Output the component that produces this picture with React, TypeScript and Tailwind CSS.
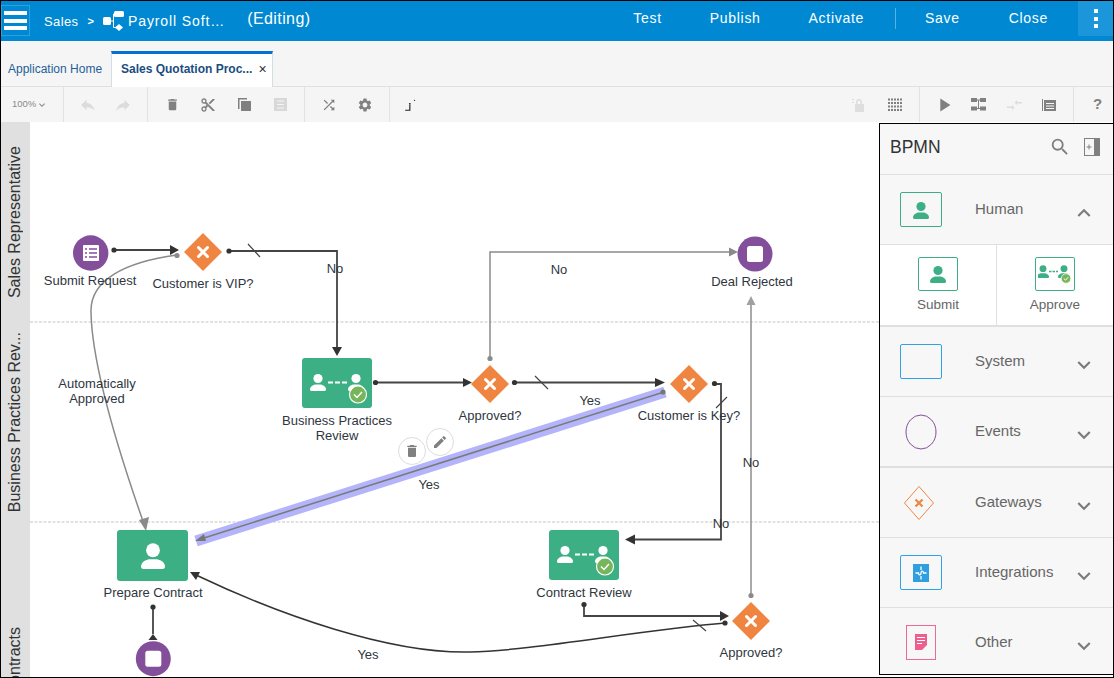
import type { ReactNode } from 'react';
import {
  MdContentCut,
  MdDelete,
  MdKeyboardArrowDown,
  MdPlayArrow,
  MdReply,
  MdSearch,
  MdSettings,
  MdShuffle,
} from 'react-icons/md';

const dark = '#444';
const grey = '#8a8a8a';

function Person({ x, y, s = 1, fill = '#fff' }: { x: number; y: number; s?: number; fill?: string }) {
  return (
    <g transform={`translate(${x} ${y}) scale(${s})`} fill={fill}>
      <circle cx="0" cy="-4.5" r="4.6" />
      <path d="M-8 6.5C-8 3-4 1.5-2 1.5h4c2 0 6 1.5 6 5 0 .8-.6 1.5-1.5 1.5h-13C-7.4 8-8 7.3-8 6.5z" />
    </g>
  );
}

function Check({ x, y }: { x: number; y: number }) {
  return (
    <g>
      <circle cx={x} cy={y} r="8.5" fill="#76b55a" stroke="#fff" strokeWidth="1.2" />
      <path d={`M${x - 4} ${y}l3 3 5-5.5`} fill="none" stroke="#fff" strokeWidth="1.5" />
    </g>
  );
}

function ReviewTask({ x, y }: { x: number; y: number }) {
  return (
    <g>
      <rect x={x} y={y} width="70" height="50" rx="3" fill="#3daf84" />
      <Person x={x + 16} y={y + 25} />
      <Person x={x + 54} y={y + 25} />
      <path d={`M${x + 26} ${y + 24.5}h20`} stroke="#fff" strokeWidth="2" strokeDasharray="5 2" />
      <Check x={x + 56} y={y + 36.5} />
    </g>
  );
}

function Gateway({ x, y }: { x: number; y: number }) {
  return (
    <g>
      <path d={`M${x} ${y - 19}L${x + 19} ${y}L${x} ${y + 19}L${x - 19} ${y}z`} fill="#ef8540" />
      <path
        d={`M${x - 4.5} ${y - 4.5}l9 9m0-9l-9 9`}
        stroke="#fff"
        strokeWidth="3"
        strokeLinecap="round"
      />
    </g>
  );
}

function EndEvent({ x, y }: { x: number; y: number }) {
  return (
    <g>
      <circle cx={x} cy={y} r="17.5" fill="#834f9b" />
      <rect x={x - 8} y={y - 8} width="16" height="16" rx="2.5" fill="#fff" />
    </g>
  );
}

function Dot({ x, y, fill = '#333' }: { x: number; y: number; fill?: string }) {
  return <circle cx={x} cy={y} r="2.6" fill={fill} />;
}

function Diagram() {
  return (
    <svg
      className="absolute left-0 top-0 h-[555px] w-[878px]"
      viewBox="1 122 878 555"
      fill="none"
    >
      <path d="M30 322H879M30 522H879" stroke="#d9d9d9" strokeWidth="1.5" strokeDasharray="3 1.5" />

      {/* grey edges */}
      <path d="M177 255C125 262 90 280 91 312C92 370 125 470 144 524" stroke={grey} strokeWidth="1.5" />
      <path d="M146 531L139 520L149 517z" fill={grey} />
      <Dot x={177} y={255.5} fill={grey} />
      <path d="M490 358V252H732" stroke={grey} strokeWidth="1.5" />
      <path d="M738 252L729 247.5V256.5z" fill={grey} />
      <Dot x={490} y={358.5} fill={grey} />
      <path d="M751 595V303" stroke="#a0a0a0" strokeWidth="1.8" />
      <path d="M751 296L746.5 305H755.5z" fill="#a0a0a0" />
      <Dot x={751} y={595.5} fill={grey} />

      {/* dark edges */}
      <path d="M114 250H172M229 251H337V350M376 382.5H465M515 382.5H658" stroke={dark} strokeWidth="1.8" />
      <path d="M179 250L170 245V255zM337 356L332 347H342zM472 382.5L463 378V387zM665 382.5L655 378V387z" fill="#333" />
      <path d="M248 244L260 257M535 376L548 389M716 408L727 397" stroke={dark} strokeWidth="1.2" />
      <path d="M715 384H721V539.5H632" stroke={dark} strokeWidth="1.8" />
      <path d="M625 539.5L635 534.5V544.5z" fill="#333" />
      <Dot x={114} y={250} />
      <Dot x={229} y={251} />
      <Dot x={375.5} y={382.5} />
      <Dot x={514.5} y={382.5} />
      <Dot x={714.5} y={383.5} />
      <path d="M584 605V616H722" stroke={dark} strokeWidth="1.8" />
      <path d="M729 616L720 611V621z" fill="#333" />
      <Dot x={584} y={604.5} />
      <path d="M725 623C640 630 530 651 470 652C390 654 280 615 196 575" stroke="#333" strokeWidth="1.5" />
      <path d="M190 572L200 572L196 580z" fill="#333" />
      <path d="M693 620L706 631" stroke={dark} strokeWidth="1.2" />
      <Dot x={725} y={623} />
      <path d="M153 607V634" stroke={dark} strokeWidth="1.8" />
      <path d="M153 634L148.5 640H157.5z" fill="#333" />
      <Dot x={153} y={607} />

      {/* selected edge */}
      <path d="M665 392L196 541" stroke="#b4b4fa" strokeWidth="11" />
      <path d="M664 392L204 538" stroke="#7a7a7a" strokeWidth="1.5" />
      <path d="M195 541L204 534L206 541z" fill="#777" />
      <Dot x={663} y={392} fill="#777" />

      {/* nodes */}
      <circle cx="90.7" cy="253" r="17.7" fill="#834f9b" />
      <rect x="83" y="245" width="16" height="16" rx="1" fill="#fff" />
      <path d="M85 249h2M89 249h8M85 253h2M89 253h8M85 257h2M89 257h8" stroke="#834f9b" strokeWidth="1.6" />
      <Gateway x={203} y={252} />
      <EndEvent x={755} y={254} />
      <ReviewTask x={302} y={358} />
      <Gateway x={490} y={384} />
      <Gateway x={689} y={384} />
      <rect x="117" y="530" width="71" height="51" rx="3" fill="#3daf84" />
      <Person x={153} y={557} s={1.5} />
      <ReviewTask x={549} y={530} />
      <Gateway x={751} y={621} />
      <EndEvent x={153.3} y={658.7} />
    </svg>
  );
}

function Label({ className, children }: { className: string; children: ReactNode }) {
  return (
    <div className={`absolute -translate-x-1/2 whitespace-nowrap text-center text-[13px] leading-[15px] text-[#2f3640] ${className}`}>
      {children}
    </div>
  );
}

function ToolGroup({ className = '', children }: { className?: string; children: ReactNode }) {
  return (
    <div className={`flex h-full items-center border-r border-[#e2e2e2] px-[6px] ${className}`}>
      {children}
    </div>
  );
}

function Tool({ className = 'text-[#808080]', children }: { className?: string; children: ReactNode }) {
  return <div className={`flex w-[36px] items-center justify-center ${className}`}>{children}</div>;
}

function PersonIcon() {
  return (
    <svg className="h-[20px] w-[20px]" viewBox="-10 -11 20 20">
      <Person x={0} y={0} fill="#3daf84" />
    </svg>
  );
}

function ApproveIcon() {
  return (
    <svg className="h-[22px] w-[34px]" viewBox="0 0 34 22">
      <Person x={5} y={9} s={0.75} fill="#3daf84" />
      <Person x={26} y={9} s={0.75} fill="#3daf84" />
      <path d="M11 8.5h9" stroke="#3daf84" strokeWidth="1.5" strokeDasharray="2.5 1" />
      <circle cx="28" cy="15.5" r="4.8" fill="#76b55a" stroke="#fff" strokeWidth=".8" />
      <path d="M25.8 15.5l1.7 1.7 2.7-3" fill="none" stroke="#fff" strokeWidth="1" />
    </svg>
  );
}

function PaletteRow({
  title,
  open,
  className = 'h-[70px]',
  children,
}: {
  title: string;
  open?: boolean;
  className?: string;
  children: ReactNode;
}) {
  return (
    <div className={`flex items-center border-b border-[#e0e0e0] bg-[#f7f7f7] pl-[20px] pr-[16px] ${className}`}>
      <div className="flex h-[35px] w-[42px] items-center justify-center">{children}</div>
      <span className="ml-[33px] flex-1 text-[15px] text-[#666]">{title}</span>
      <MdKeyboardArrowDown
        className={`mt-[7px] h-[26px] w-[26px] text-[#7b7b7b] ${open ? 'rotate-180' : ''}`}
      />
    </div>
  );
}

function Palette() {
  return (
    <div className="mt-px mb-[2px] flex w-[234px] flex-col border-b border-l border-t border-black bg-[#f7f7f7]">
      <div className="flex h-[51px] shrink-0 items-center border-b border-[#e0e0e0] pb-[4px] pl-[10px] pr-[13px]">
        <span className="flex-1 text-[17.5px] text-[#333]">BPMN</span>
        <MdSearch className="h-[22px] w-[22px] text-[#808080]" />
        <svg className="ml-[13px] h-[18px] w-[16px] text-[#808080]" viewBox="0 0 16 18" fill="none">
          <rect x=".5" y=".5" width="15" height="17" stroke="currentColor" />
          <rect x="10" y="1" width="5" height="16" fill="currentColor" />
          <path d="M2.5 9h5M5 6.5v5" stroke="currentColor" />
        </svg>
      </div>
      <PaletteRow title="Human" open>
        <div className="flex h-[35px] w-[42px] items-center justify-center rounded-[2px] border border-[#3daf84]">
          <PersonIcon />
        </div>
      </PaletteRow>
      <div className="flex h-[82px] shrink-0 border-b-2 border-[#e0e0e0] bg-white">
        <div className="flex w-[117px] flex-col items-center border-r border-[#e0e0e0] pt-[12px]">
          <div className="flex h-[34px] w-[40px] items-center justify-center rounded-[2px] border border-[#3daf84]">
            <PersonIcon />
          </div>
          <span className="mt-[6px] text-[13.5px] leading-[15px] text-[#666]">Submit</span>
        </div>
        <div className="flex flex-1 flex-col items-center pt-[12px]">
          <div className="flex h-[34px] w-[40px] items-center justify-center rounded-[2px] border border-[#3daf84]">
            <ApproveIcon />
          </div>
          <span className="mt-[6px] text-[13.5px] leading-[15px] text-[#666]">Approve</span>
        </div>
      </div>
      <PaletteRow title="System">
        <div className="h-[35px] w-[42px] rounded-[2px] border border-[#2fa3e6]" />
      </PaletteRow>
      <PaletteRow title="Events" className="h-[71px] border-b-2">
        <svg className="h-[36px] w-[32px]" viewBox="0 0 32 36" fill="none">
          <ellipse cx="16" cy="18" rx="15" ry="17" stroke="#834f9b" />
        </svg>
      </PaletteRow>
      <PaletteRow title="Gateways">
        <svg className="-ml-[4px] h-[36px] w-[32px]" viewBox="0 0 32 36" fill="none">
          <path d="M16 1.5L30.5 18L16 34.5L1.5 18z" stroke="#ef8540" strokeLinejoin="round" />
          <path d="M12.5 14.5l7 7m0-7l-7 7" stroke="#ef8540" strokeWidth="2.2" />
        </svg>
      </PaletteRow>
      <PaletteRow title="Integrations">
        <div className="flex h-[35px] w-[42px] items-center justify-center rounded-[2px] border border-[#2fa3e6]">
          <svg className="h-[18px] w-[16px]" viewBox="0 0 16 18" fill="none">
            <rect width="16" height="18" fill="#2f9fe0" />
            <path d="M8 2.5v3.5M8 12v3.5M2.5 9h3c0 2.5 2.5 2.5 2.5 0s2.500-2.5 2.500 0h3" stroke="#fff" strokeWidth="1.3" />
          </svg>
        </div>
      </PaletteRow>
      <PaletteRow title="Other" className="flex-1 border-b-0 pt-[2px]">
        <div className="flex h-[35px] w-[30px] items-center justify-center border border-[#ec6a96]">
          <svg className="h-[16px] w-[13px]" viewBox="0 0 13 16">
            <path d="M0 0h12v11l-5 5H0z" fill="#ec5f8e" />
            <path d="M2 3.5h8M2 6.5h8M2 9.5h5" stroke="#fff" />
          </svg>
        </div>
      </PaletteRow>
    </div>
  );
}

export default function App() {
  return (
    <div className="flex h-[678px] w-[1114px] flex-col overflow-hidden border border-black bg-white font-['Liberation_Sans',Arial,sans-serif]">
      <header className="relative flex h-[40px] shrink-0 items-center bg-[#0089d2] text-white">
        <div className="mt-[4px] flex h-[31px] w-[29px] flex-col items-center justify-center gap-[3.5px] self-start border border-[#2aa0dd]">
          <span className="h-[4px] w-[23px] bg-white" />
          <span className="h-[4px] w-[23px] bg-white" />
          <span className="h-[4px] w-[23px] bg-white" />
        </div>
        <span className="ml-[14px] mt-[1px] text-[13px] tracking-[.4px]">Sales</span>
        <span className="ml-[9px] mt-[1px] text-[11px] font-bold">&gt;</span>
        <svg className="ml-[9px] h-[20px] w-[21px]" viewBox="0 0 21 20" fill="none">
          <rect x="0" y="6" width="8" height="8" rx="1.5" fill="#fff" />
          <rect x="11" y="0" width="10" height="6" rx="1.5" fill="#fff" />
          <path d="M16 13l4 3.5-4 3.5-4-3.5z" fill="#fff" />
          <path d="M8 10h2.5V3H12M10.5 10v6.5H13" stroke="#fff" />
        </svg>
        <span className="ml-[4px] mt-[1px] text-[14px] tracking-[.9px]">Payroll Soft…</span>
        <span className="ml-[22px] -mt-[5px] text-[16px] tracking-[.4px]">(Editing)</span>
        <nav className="absolute inset-y-0 right-0 flex items-center text-[14px] tracking-[.7px]">
          <span className="mr-[48px] -mt-[5px]">Test</span>
          <span className="mr-[48px] -mt-[5px]">Publish</span>
          <span className="mr-[31px] -mt-[5px]">Activate</span>
          <span className="mr-[29px] mb-[5px] h-[21px] w-px bg-[#55b2e3]" />
          <span className="mr-[49px] -mt-[5px]">Save</span>
          <span className="-mt-[5px]">Close</span>
          <div className="ml-[30px] flex h-[35px] w-[35px] flex-col items-center justify-center gap-[3.5px] self-start bg-[#1b96da]">
            <span className="h-[4px] w-[4px] bg-white" />
            <span className="h-[4px] w-[4px] bg-white" />
            <span className="h-[4px] w-[4px] bg-white" />
          </div>
        </nav>
      </header>

      <div className="flex h-[46px] shrink-0 items-end border-b border-[#e0e0e0] bg-[#f5f5f5] text-[12px]">
        <span className="mb-[8px] ml-[7px] w-[103px] text-[#1f5f99]">Application Home</span>
        <div className="-mb-px flex h-[36px] w-[162px] items-center border-x border-t-[3px] border-x-[#d5dde5] border-t-[#0572ce] bg-white pb-[3px] pl-[9px] font-bold text-[#1a4d80]">
          <span>Sales Quotation Proc...</span>
          <span className="ml-[6px] text-[14px] font-normal text-[#333]">×</span>
        </div>
      </div>

      <div className="flex h-[35px] shrink-0 items-center bg-[#f5f5f5]">
        <ToolGroup className="w-[63px] text-[9.5px] text-[#8a8a8a]">
          <span className="ml-[5px]">100%</span>
          <MdKeyboardArrowDown className="h-[12px] w-[12px]" />
        </ToolGroup>
        <ToolGroup className="w-[84px]">
          <Tool className="text-[#dcdcdc]"><MdReply className="h-[18px] w-[18px]" /></Tool>
          <Tool className="text-[#dcdcdc]"><MdReply className="h-[18px] w-[18px] -scale-x-100" /></Tool>
        </ToolGroup>
        <ToolGroup className="w-[157px]">
          <Tool><MdDelete className="h-[15px] w-[15px]" /></Tool>
          <Tool><MdContentCut className="h-[16px] w-[16px]" /></Tool>
          <Tool>
            <svg className="h-[13px] w-[13px]" viewBox="0 0 13 13" fill="currentColor">
              <path d="M0 0h9v1.5H1.5V11H0zM3 3h10v10H3z" />
            </svg>
          </Tool>
          <Tool className="text-[#d8d8d8]">
            <svg className="h-[13px] w-[13px]" viewBox="0 0 13 13">
              <path d="M0 0h13v13H0z" fill="currentColor" />
              <path d="M3 3h7M3 6.5h7M3 10h7" stroke="#f5f5f5" />
            </svg>
          </Tool>
        </ToolGroup>
        <ToolGroup className="w-[85px]">
          <Tool><MdShuffle className="h-[16px] w-[16px]" /></Tool>
          <Tool><MdSettings className="h-[16px] w-[16px]" /></Tool>
        </ToolGroup>
        <div className="flex h-full flex-1 items-center pl-[3px]">
          <Tool className="text-[#222]">
            <svg className="h-[14px] w-[14px]" viewBox="0 0 12 12" fill="none">
              <path d="M1 10.5h4V6" stroke="currentColor" />
              <circle cx="5" cy="5" r=".8" fill="currentColor" />
              <circle cx="9" cy="2" r=".6" fill="currentColor" />
            </svg>
          </Tool>
        </div>
        <ToolGroup>
          <Tool className="text-[#dedede]">
            <svg className="h-[14px] w-[14px]" viewBox="0 0 14 14" fill="currentColor">
              <path d="M4 6V4a3 3 0 016 0v2h2v8H3V6zm1.5 0h3V4a1.5 1.5 0 00-3 0z" />
              <path d="M0 1h2v1H0zM0 4h2v1H0z" />
            </svg>
          </Tool>
          <Tool>
            <svg className="h-[14px] w-[15px]" viewBox="0 0 15 14" fill="none">
              <path d="M0 1.5h15M0 5h15M0 8.5h15M0 12h15" stroke="currentColor" strokeWidth="2" strokeDasharray="2 1" />
            </svg>
          </Tool>
        </ToolGroup>
        <ToolGroup className="w-[154px]">
          <Tool><MdPlayArrow className="h-[22px] w-[22px]" /></Tool>
          <Tool>
            <svg className="h-[13px] w-[15px]" viewBox="0 0 15 13" fill="currentColor">
              <path d="M0 0h6v4H0zM9 0h6v4H9zM0 8.5h6v4H0zM9 8.5h6v4H9z" />
              <path d="M6 2h3M6 10.5h3M7.5 2v8.5" stroke="currentColor" />
            </svg>
          </Tool>
          <Tool className="text-[#dcdcdc]">
            <svg className="h-[12px] w-[15px]" viewBox="0 0 15 12" fill="currentColor">
              <path d="M15 3H10V1L7.5 3.5 10 6V4.5h5zM0 7.5h5V6l2.5 2.5L5 11V9H0z" />
            </svg>
          </Tool>
          <Tool>
            <svg className="h-[12px] w-[14px]" viewBox="0 0 14 12" fill="none">
              <path d="M.5 0v12" stroke="currentColor" />
              <path d="M2 1h12v11H2z" fill="currentColor" />
              <path d="M4 4.5h8M4 7h8M4 9.5h8" stroke="#f5f5f5" />
            </svg>
          </Tool>
        </ToolGroup>
        <div className="flex h-full w-[39px] items-center justify-center pl-[8px] text-[15px] font-bold text-[#808080]">?</div>
      </div>

      <div className="flex min-h-0 flex-1">
        <div className="relative w-[878px] shrink-0 overflow-hidden">
          <div className="absolute inset-y-0 left-0 flex w-[29px] flex-col bg-[#e0e0e0] pr-[2px] text-[16px] text-[#333]">
            <div className="flex h-[200px] shrink-0 items-center justify-center">
              <span className="rotate-180 whitespace-nowrap [writing-mode:vertical-rl]">Sales Representative</span>
            </div>
            <div className="flex h-[200px] shrink-0 items-center justify-center">
              <span className="rotate-180 whitespace-nowrap [writing-mode:vertical-rl]">Business Practices Rev...</span>
            </div>
            <div className="flex h-[278px] shrink-0 items-center justify-center">
              <span className="rotate-180 whitespace-nowrap [writing-mode:vertical-rl]">Contracts</span>
            </div>
          </div>
          <Diagram />
          <Label className="left-[89px] top-[151px]">Submit Request</Label>
          <Label className="left-[202px] top-[154px]">Customer is VIP?</Label>
          <Label className="left-[334px] top-[139px]">No</Label>
          <Label className="left-[558px] top-[140px]">No</Label>
          <Label className="left-[751px] top-[152px]">Deal Rejected</Label>
          <Label className="left-[96px] top-[254px] text-[12.5px]">
            Automatically
            <br />
            Approved
          </Label>
          <Label className="left-[336px] top-[291px]">
            Business Practices
            <br />
            Review
          </Label>
          <Label className="left-[489px] top-[286px]">Approved?</Label>
          <Label className="left-[589px] top-[271px]">Yes</Label>
          <Label className="left-[688px] top-[286px]">Customer is Key?</Label>
          <Label className="left-[428px] top-[355px]">Yes</Label>
          <Label className="left-[750px] top-[333px]">No</Label>
          <Label className="left-[720px] top-[394px]">No</Label>
          <Label className="left-[152px] top-[463px]">Prepare Contract</Label>
          <Label className="left-[583px] top-[463px]">Contract Review</Label>
          <Label className="left-[750px] top-[523px]">Approved?</Label>
          <Label className="left-[367px] top-[525px]">Yes</Label>

          <div className="absolute left-[425px] top-[306px] flex h-[28px] w-[28px] items-center justify-center rounded-full border border-[#ddd] bg-white text-[#808080]">
            <svg className="h-[16px] w-[16px]" viewBox="0 0 24 24" fill="currentColor">
              <path d="M3 17.25V21h3.75L17.81 9.94l-3.75-3.75zM20.71 7.04a1 1 0 000-1.41l-2.34-2.34a1 1 0 00-1.41 0l-1.83 1.83 3.75 3.75z" />
            </svg>
          </div>
          <div className="absolute left-[397px] top-[315px] flex h-[28px] w-[28px] items-center justify-center rounded-full border border-[#ddd] bg-white text-[#808080]">
            <MdDelete className="h-[16px] w-[16px]" />
          </div>
        </div>
        <Palette />
      </div>
    </div>
  );
}
